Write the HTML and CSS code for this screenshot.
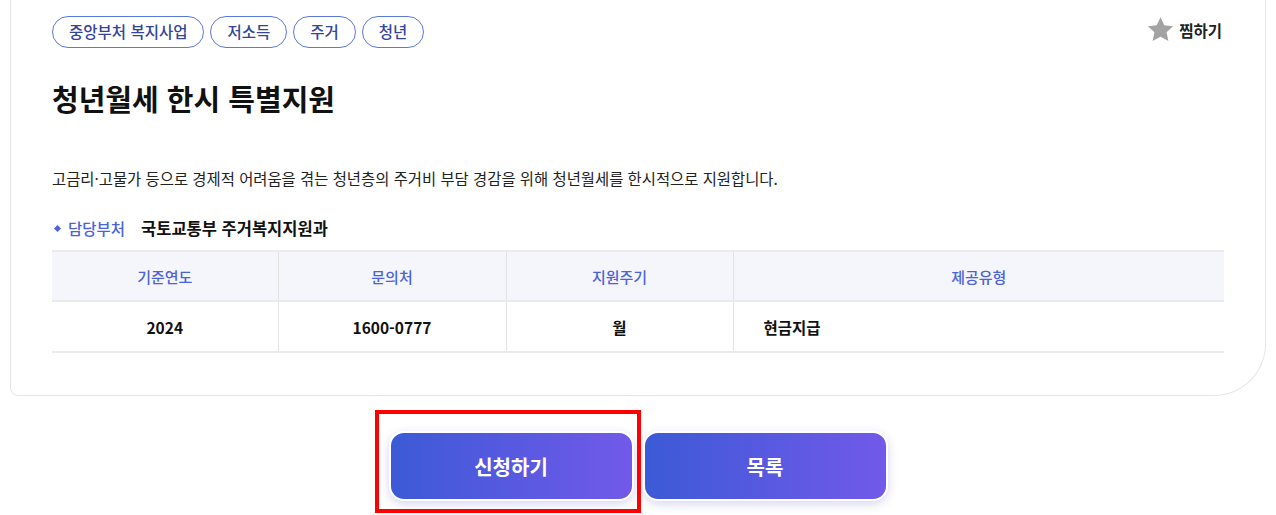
FILE: index.html
```html
<!DOCTYPE html>
<html lang="ko">
<head>
<meta charset="utf-8">
<link rel="stylesheet" href="styles.css">
</head>
<body>
<div class="page">
  <section class="card">
    <div class="top-row">
      <ul class="tags">
        <li class="tag">중앙부처 복지사업</li>
        <li class="tag">저소득</li>
        <li class="tag">주거</li>
        <li class="tag">청년</li>
      </ul>
      <button class="fav" type="button">
        <svg class="star" viewBox="0 0 24 24" width="27" height="27" aria-hidden="true"><path d="M12 1l3.4 7.2 7.8.9-5.8 5.4 1.6 7.8L12 18.4l-7 3.9 1.6-7.8L.8 9.1l7.8-.9z" fill="#a3a3a3"/></svg>
        <span>찜하기</span>
      </button>
    </div>
    <h1 class="title">청년월세 한시 특별지원</h1>
    <p class="desc">고금리·고물가 등으로 경제적 어려움을 겪는 청년층의 주거비 부담 경감을 위해 청년월세를 한시적으로 지원합니다.</p>
    <p class="dept"><span class="dept-label">담당부처</span><span class="dept-name">국토교통부 주거복지지원과</span></p>
    <table class="info">
      <thead>
        <tr><th class="c1">기준연도</th><th class="c2">문의처</th><th class="c3">지원주기</th><th>제공유형</th></tr>
      </thead>
      <tbody>
        <tr><td class="center">2024</td><td class="center">1600-0777</td><td class="center">월</td><td class="left">현금지급</td></tr>
      </tbody>
    </table>
  </section>
  <div class="actions">
    <div class="btn-wrap">
      <button class="btn" type="button">신청하기</button>
      <span class="highlight" aria-hidden="true"></span>
    </div>
    <button class="btn" type="button">목록</button>
  </div>
</div>
</body>
</html>
```

FILE: styles.css
```css
* { box-sizing: border-box; }
html, body { margin: 0; padding: 0; background: #fff; }
body {
  font-family: "Noto Sans CJK KR", "Noto Sans", "Liberation Sans", sans-serif;
  color: #111;
}
.page { padding: 0 10px; }

.card {
  border: 1px solid #e6e6e6;
  border-top: none;
  border-radius: 0 0 52px 8px;
  padding: 16px 41px 42px 41px;
}

.top-row {
  display: flex;
  justify-content: space-between;
  align-items: flex-start;
}
.tags {
  list-style: none;
  margin: 0;
  padding: 0;
  display: flex;
  gap: 6px;
}
.tag {
  height: 32px;
  padding: 0 16px;
  border: 1.5px solid #5a78e0;
  border-radius: 16px;
  color: #33449a;
  font-size: 15.5px;
  font-weight: 500;
  display: flex;
  align-items: center;
  line-height: 1;
}
.fav {
  display: flex;
  align-items: center;
  gap: 5px;
  border: none;
  background: none;
  padding: 0;
  margin-right: 2px;
  font-family: inherit;
  font-size: 15.5px;
  font-weight: 700;
  color: #222;
}
.star { display: block; }

.title {
  margin: 30px 0 0;
  font-size: 29px;
  font-weight: 700;
  line-height: 40px;
}
.desc {
  margin: 49px 0 0;
  font-size: 15.4px;
  line-height: 22px;
  color: #222;
}
.dept {
  margin: 28px 0 0;
  font-size: 15.5px;
  line-height: 22px;
  display: flex;
  align-items: center;
}
.dept-label {
  color: #4a63d8;
  font-weight: 500;
  display: flex;
  align-items: center;
}
.dept-label::before {
  content: "";
  width: 5px;
  height: 5px;
  background: #4a63d8;
  transform: rotate(45deg);
  margin: 0 8px 0 3px;
}
.dept-name {
  margin-left: 16px;
  font-size: 16.5px;
  font-weight: 600;
  color: #111;
}

.info {
  margin-top: 11px;
  width: 100%;
  border-collapse: collapse;
}
.info th, .info td {
  border-left: 1px solid #e3e3e3;
}
.info th:first-child, .info td:first-child { border-left: none; }
.info thead tr { background: #f5f6fb; border-top: 2px solid #ebebeb; border-bottom: 2px solid #e9e9ee; }
.info th {
  height: 50px;
  font-size: 15px;
  font-weight: 500;
  color: #4a63d8;
  text-align: center;
}
.info tbody tr { border-bottom: 2px solid #ebebeb; }
.info td {
  height: 51px;
  font-size: 15.5px;
  font-weight: 600;
  color: #111;
}
.info .c1 { width: 226px; }
.info .c2 { width: 228px; }
.info .c3 { width: 227px; }
.center { text-align: center; }
.left { text-align: left; padding-left: 30px; }

.actions {
  display: flex;
  justify-content: center;
  gap: 9px;
  margin-top: 35px;
  padding-bottom: 20px;
}
.btn-wrap { position: relative; }
.btn {
  display: block;
  width: 245px;
  height: 70px;
  border: 2px solid #fff;
  border-radius: 15px;
  background: linear-gradient(90deg, #3c5ad6 0%, #7259ea 100%);
  box-shadow: 0 3px 10px rgba(90, 90, 200, 0.25);
  color: #fff;
  font-family: inherit;
  font-size: 20px;
  font-weight: 700;
}
.highlight {
  position: absolute;
  left: -14px;
  top: -21px;
  width: 266px;
  height: 103px;
  border: 4px solid #ff0000;
  pointer-events: none;
}
```
